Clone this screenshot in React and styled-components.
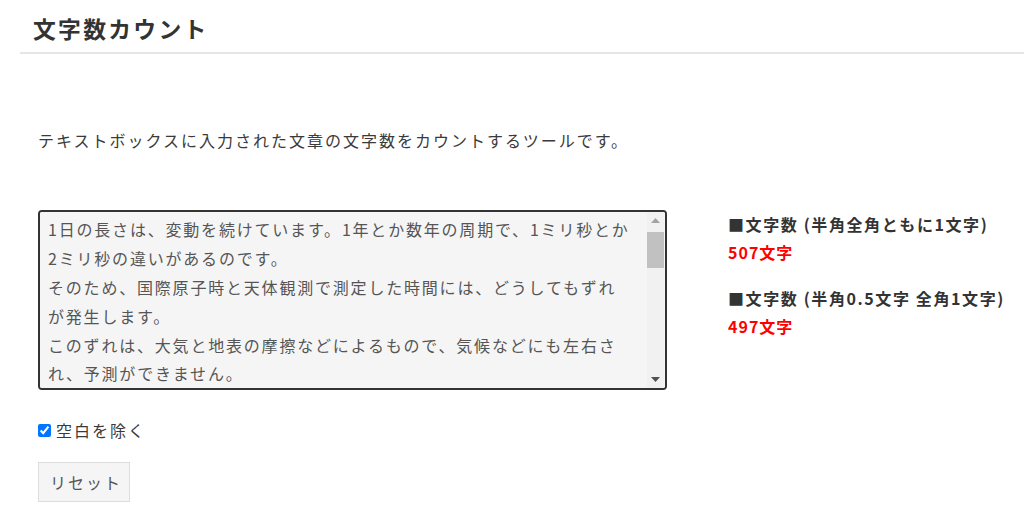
import { useState } from "react";
import styled, { createGlobalStyle } from "styled-components";

const Global = createGlobalStyle`
  html, body {
    margin: 0;
    padding: 0;
    background: #ffffff;
  }
  body {
    font-family: "Noto Sans CJK JP", "Noto Sans", sans-serif;
    color: #333333;
  }
`;

const Pagina = styled.div`
  width: 1024px;
  min-height: 514px;
`;

const Cabecera = styled.header`
  margin-left: 20px;
  padding: 12px 13px 6px;
  border-bottom: 2px solid #e6e6e6;
`;

const Titulo = styled.h1`
  margin: 0;
  font-size: 22.8px;
  line-height: 33.6px;
  font-weight: 700;
  letter-spacing: 0.1em;
  color: #333333;
`;

const Contenido = styled.main`
  padding: 0 0 0 38px;
`;

const Descripcion = styled.p`
  margin: 72px 0 0;
  font-size: 16px;
  line-height: 28.8px;
  letter-spacing: 2px;
  color: #3a3a3a;
`;

const Fila = styled.div`
  display: flex;
  align-items: flex-start;
  gap: 61px;
  margin-top: 56px;
`;

const Caja = styled.div`
  position: relative;
  width: 629px;
  height: 180px;
`;

const AreaTexto = styled.textarea`
  box-sizing: border-box;
  width: 100%;
  height: 100%;
  margin: 0;
  padding: 3px 31px 3px 8px;
  border: 2px solid #333333;
  border-radius: 4px;
  background: #f5f5f5;
  font-family: "Noto Sans CJK JP", "Noto Sans", sans-serif;
  font-size: 16px;
  line-height: 28.8px;
  letter-spacing: 1.8px;
  color: #555555;
  resize: none;
  outline: none;
  display: block;
  scrollbar-width: none;

  &::-webkit-scrollbar {
    display: none;
  }
`;

/* barra de desplazamiento dibujada encima del textarea */
const Barra = styled.div`
  position: absolute;
  top: 2px;
  right: 3px;
  bottom: 2px;
  width: 17px;
  background: #f1f1f1;
  display: flex;
  flex-direction: column;
  pointer-events: none;
`;

const Flecha = styled.div`
  height: 17px;
  flex: none;
  display: flex;
  align-items: center;
  justify-content: center;
`;

const Pista = styled.div`
  flex: 1;
  position: relative;
`;

const Pulgar = styled.div`
  position: absolute;
  left: 0;
  right: 0;
  top: ${(p) => p.$arriba}px;
  height: ${(p) => p.$alto}px;
  background: #c1c1c1;
`;

const Resultados = styled.div`
  display: flex;
  flex-direction: column;
  gap: 18px;
`;

const Bloque = styled.div`
  display: flex;
  flex-direction: column;
`;

const Etiqueta = styled.div`
  font-size: 16px;
  line-height: 28px;
  font-weight: 700;
  letter-spacing: 1.6px;
  color: #333333;
  white-space: nowrap;
`;

const Valor = styled.div`
  font-size: 16px;
  line-height: 28px;
  font-weight: 700;
  letter-spacing: 1px;
  color: #ff0000;
`;

const Opcion = styled.label`
  display: flex;
  align-items: center;
  gap: 5px;
  margin-top: 26px;
  font-size: 16px;
  line-height: 28.8px;
  letter-spacing: 2px;
  color: #3a3a3a;
`;

const Casilla = styled.input`
  width: 13px;
  height: 13px;
  margin: 0;
`;

const BotonReset = styled.button`
  box-sizing: border-box;
  display: block;
  margin-top: 17px;
  width: 92px;
  height: 40px;
  padding: 0 0 0 4px;
  background: #f5f5f5;
  border: 1px solid #dddddd;
  border-radius: 0;
  font-family: "Noto Sans CJK JP", "Noto Sans", sans-serif;
  font-size: 16px;
  letter-spacing: 2px;
  color: #555555;
  text-align: center;
  white-space: nowrap;
`;

const textoInicial = `1日の長さは、変動を続けています。1年とか数年の周期で、1ミリ秒とか2ミリ秒の違いがあるのです。
そのため、国際原子時と天体観測で測定した時間には、どうしてもずれが発生します。
このずれは、大気と地表の摩擦などによるもので、気候などにも左右され、予測ができません。
そこで、このずれが0.9秒以上にならないように調整するため、1秒を挿入したり削除したりします。これを「うるう秒」と呼んでいます。
うるう秒の実施は、国際地球回転・基準系事業（IERS）が決定しています。
うるう秒を挿入する場合は、通常、6月30日か12月31日の最後の秒の後に「60秒」を挿入します。
日本では、日本標準時の午前8時59分59秒の後に、8時59分60秒が挿入されることになります。
1972年に初めて実施されてから、これまでに27回のうるう秒の挿入が行われました。
コンピュータのシステムでは、うるう秒に対応できずに不具合が発生することもあるため、注意が必要です。
近年では、うるう秒を廃止しようという議論も進められており、2035年までに廃止されることが決まっています。`;

const App = () => {
  const [texto, actualizarTexto] = useState(textoInicial);
  const [sinEspacios, actualizarSinEspacios] = useState(true);

  return (
    <Pagina>
      <Global />
      <Cabecera>
        <Titulo>文字数カウント</Titulo>
      </Cabecera>
      <Contenido>
        <Descripcion>
          テキストボックスに入力された文章の文字数をカウントするツールです。
        </Descripcion>
        <Fila>
          <Caja>
            <AreaTexto
              value={texto}
              onChange={(e) => actualizarTexto(e.target.value)}
            />
            <Barra>
              <Flecha>
                <svg width="9" height="5" viewBox="0 0 9 5">
                  <path d="M0 5 L4.5 0 L9 5 Z" fill="#a3a3a3" />
                </svg>
              </Flecha>
              <Pista>
                <Pulgar $arriba={3} $alto={36} />
              </Pista>
              <Flecha>
                <svg width="9" height="5" viewBox="0 0 9 5">
                  <path d="M0 0 L4.5 5 L9 0 Z" fill="#505050" />
                </svg>
              </Flecha>
            </Barra>
          </Caja>
          <Resultados>
            <Bloque>
              <Etiqueta>■文字数 (半角全角ともに1文字)</Etiqueta>
              <Valor>507文字</Valor>
            </Bloque>
            <Bloque>
              <Etiqueta>■文字数 (半角0.5文字 全角1文字)</Etiqueta>
              <Valor>497文字</Valor>
            </Bloque>
          </Resultados>
        </Fila>
        <Opcion>
          <Casilla
            type="checkbox"
            checked={sinEspacios}
            onChange={(e) => actualizarSinEspacios(e.target.checked)}
          />
          空白を除く
        </Opcion>
        <BotonReset onClick={() => actualizarTexto("")}>リセット</BotonReset>
      </Contenido>
    </Pagina>
  );
};

export default App;
